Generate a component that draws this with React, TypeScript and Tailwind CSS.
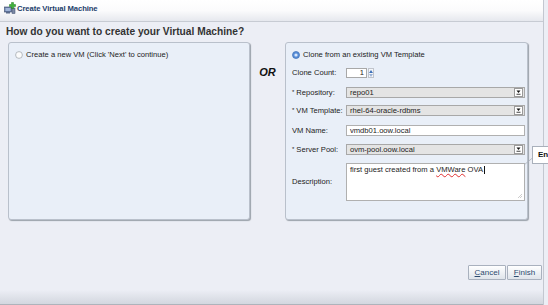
import React from "react";

const font = { fontFamily: '"Liberation Sans", Arial, sans-serif' };

function VmIcon() {
  return (
    <svg width="12" height="12" viewBox="0 0 12 12">
      <rect x="0.5" y="5" width="7" height="5" fill="#6b7fa8" stroke="#3b4a6b" strokeWidth="0.6" />
      <rect x="1.5" y="6" width="5" height="3" fill="#9fb4d8" />
      <rect x="2" y="10" width="4" height="1.5" fill="#5a6a8a" />
      <rect x="8" y="6" width="3" height="5.5" fill="#7d8aa5" stroke="#3b4a6b" strokeWidth="0.5" />
      <path d="M7.5 0.5h2v2h2v2h-2v2h-2v-2h-2v-2h2z" fill="#3fb23a" stroke="#1f7a1d" strokeWidth="0.5" />
    </svg>
  );
}

function Radio({ checked }: { checked?: boolean }) {
  return (
    <svg width="8" height="8" viewBox="0 0 8 8" className="shrink-0">
      {checked ? (
        <>
          <circle cx="4" cy="4" r="3.5" fill="#5a8fd8" stroke="#3b6db6" strokeWidth="0.7" />
          <circle cx="4" cy="4" r="1.6" fill="#d7e6fa" />
        </>
      ) : (
        <circle cx="4" cy="4" r="3.4" fill="#fbfbfb" stroke="#9aa0a8" strokeWidth="0.7" />
      )}
    </svg>
  );
}

function DropArrow() {
  return (
    <div className="w-[9px] h-[9px] bg-white border border-[#9a9a9a] flex flex-col items-center justify-center shrink-0 mr-[1px]">
      <svg width="5" height="5" viewBox="0 0 5 5">
        <path d="M0.5 0.5h4L2.5 3z" fill="#111" />
        <rect x="0.5" y="3.8" width="4" height="0.8" fill="#111" />
      </svg>
    </div>
  );
}

function Select({ value }: { value: string }) {
  return (
    <div className="flex-1 h-[11px] bg-[#e4e4e4] border border-[#a8a8a8] flex items-center pl-[3px]">
      <span className="flex-1 text-[7.6px] text-[#222] leading-none">{value}</span>
      <DropArrow />
    </div>
  );
}

function Row({ label, req, children, className }: { label: string; req?: boolean; children: React.ReactNode; className?: string }) {
  return (
    <div className={`flex items-center ${className ?? ""}`}>
      <div className="w-[54px] shrink-0 text-[7.6px] text-[#222] leading-none whitespace-nowrap">
        {req && <span className="text-[6px] align-top mr-[2px]">*</span>}
        {label}
      </div>
      {children}
    </div>
  );
}

function Button({ first, rest, className }: { first: string; rest: string; className?: string }) {
  return (
    <div
      className={`h-[15px] flex items-center justify-center bg-gradient-to-b from-[#ffffff] to-[#dfe4eb] border border-[#a9b1be] rounded-[1px] text-[8px] text-[#2c4a6e] ${className ?? ""}`}
    >
      <span className="underline">{first}</span>
      {rest}
    </div>
  );
}

export default function App() {
  return (
    <div className="w-[548px] h-[305px] relative overflow-hidden bg-[#eceef5]" style={font}>
      <div className="w-[544px] h-[305px] flex flex-col border-r border-[#c3c7d0]">
        {/* title bar */}
        <div className="h-[22px] shrink-0 bg-gradient-to-b from-[#ffffff] via-[#fbfbfc] to-[#e6e8ee] border-b border-[#c7cbd3] flex items-start pl-[4px] pt-[2px] gap-[1px]">
          <VmIcon />
          <span className="text-[7.7px] font-bold text-[#22406a] leading-none mt-[3px] tracking-[-0.1px]">
            Create Virtual Machine
          </span>
        </div>

        <div className="pl-[6px] pt-[5px] h-[20px] shrink-0">
          <h1 className="text-[10.2px] font-bold text-[#333] leading-none">How do you want to create your Virtual Machine?</h1>
        </div>

        {/* panels */}
        <div className="flex pl-[8px] shrink-0">
          <div className="w-[242px] h-[178px] bg-[#e9eff8] border border-[#b9c0cb] rounded-[3px] shadow-[1px_1px_1px_#9ba1aa] pt-[8px] pl-[6px]">
            <div className="flex items-center gap-[3px]">
              <Radio />
              <span className="text-[7.6px] text-[#222] leading-none">Create a new VM (Click 'Next' to continue)</span>
            </div>
          </div>

          <div className="w-[35px] flex justify-center pt-[25px]">
            <span className="text-[11px] font-bold italic text-[#111] leading-none">OR</span>
          </div>

          <div className="w-[243px] h-[178px] bg-[#e9eff8] border border-[#b9c0cb] rounded-[3px] shadow-[1px_1px_1px_#9ba1aa] pt-[8px] pl-[6px] pr-[2px] flex flex-col">
            <div className="flex items-center gap-[3px] h-[8px]">
              <Radio checked />
              <span className="text-[7.6px] text-[#222] leading-none">Clone from an existing VM Template</span>
            </div>

            <Row label="Clone Count:" className="mt-[9px] h-[10px]">
              <div className="flex items-center">
                <div className="w-[21px] h-[10px] bg-white border border-[#a8a8a8] text-[7.6px] text-[#222] leading-none flex items-center justify-end pr-[2px]">
                  1
                </div>
                <div className="w-[6px] h-[10px] flex flex-col items-center justify-center gap-[1px] ml-[1px] bg-[#f4f6f9] border border-[#c0c4cc]">
                  <svg width="4" height="3" viewBox="0 0 4 3">
                    <path d="M0 3L2 0L4 3z" fill="#3c6fb8" />
                  </svg>
                  <svg width="4" height="3" viewBox="0 0 4 3">
                    <path d="M0 0L2 3L4 0z" fill="#9db3d6" />
                  </svg>
                </div>
              </div>
            </Row>

            <Row label="Repository:" req className="mt-[9px]">
              <Select value="repo01" />
            </Row>

            <Row label="VM Template:" req className="mt-[7px]">
              <Select value="rhel-64-oracle-rdbms" />
            </Row>

            <Row label="VM Name:" className="mt-[9px]">
              <div className="flex-1 h-[11px] bg-white border border-[#b0b0b0] flex items-center pl-[3px] text-[7.6px] text-[#222] leading-none">
                vmdb01.oow.local
              </div>
            </Row>

            <Row label="Server Pool:" req className="mt-[8px]">
              <Select value="ovm-pool.oow.local" />
            </Row>

            <Row label="Description:" className="mt-[8px]">
              <div className="flex-1 h-[38px] bg-white border border-[#b0b0b0] relative pl-[3px] pt-[2px] text-[7.6px] text-[#222] leading-none">
                first guest created from a{" "}
                <span className="underline decoration-wavy decoration-[#e03030] decoration-[0.6px] underline-offset-[1px]">VMWare</span>{" "}
                OVA<span className="inline-block w-[0.6px] h-[8px] bg-[#111] align-middle ml-[0.5px]" />
                <svg width="6" height="6" viewBox="0 0 6 6" className="absolute right-[1px] bottom-[1px]">
                  <path d="M5 1L1 5M5 3L3 5" stroke="#b8b8b8" strokeWidth="0.7" />
                </svg>
              </div>
            </Row>
          </div>
        </div>

        {/* buttons */}
        <div className="flex-1 flex items-end justify-end pr-[1px] pb-[10px]">
          <div className="flex gap-[1px]">
            <Button first="C" rest="ancel" className="w-[38px]" />
            <Button first="F" rest="inish" className="w-[35px]" />
          </div>
        </div>

        {/* footer strip */}
        <div className="h-[15px] shrink-0 bg-gradient-to-b from-[#eceef5] to-[#d3d7df] border-b border-[#aeb3bb]" />
      </div>

      {/* tooltip */}
      <div className="absolute left-[532px] top-[146px] w-[30px] h-[18px] bg-white border border-[#a9b0bb] flex items-center pl-[5px]">
        <span className="text-[8px] font-bold text-[#111] leading-none">En</span>
      </div>
      <svg className="absolute left-[523px] top-[157px]" width="12" height="9" viewBox="0 0 12 9">
        <path d="M10 0.5L1 8" stroke="#a9b0bb" strokeWidth="0.8" fill="none" />
      </svg>
    </div>
  );
}
